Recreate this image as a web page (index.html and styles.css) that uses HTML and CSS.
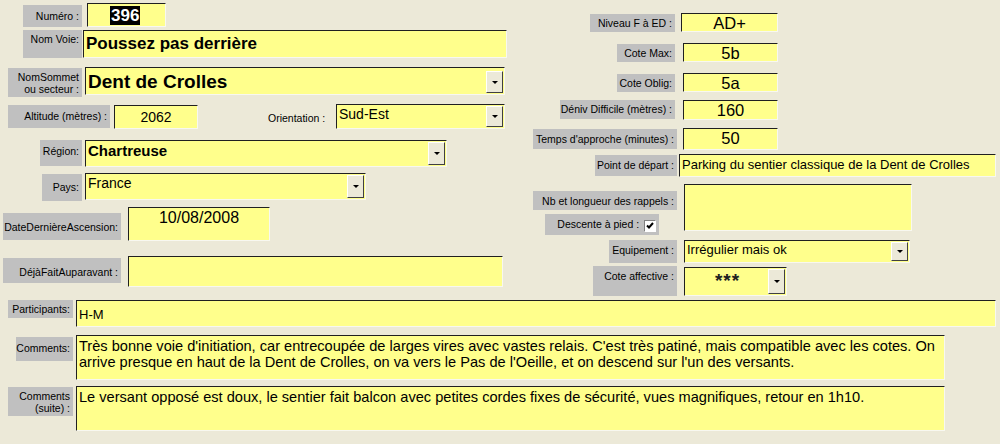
FILE: index.html
```html
<!DOCTYPE html>
<html lang="fr">
<head>
    <meta charset="UTF-8">
    <title>Fiche voie</title>
    <link rel="stylesheet" href="styles.css">
</head>
<body>
    <div class="form">
        <div class="top">
            <!-- colonne de gauche -->
            <div class="left">
                <div class="row r-num">
                    <div class="lbl">Numéro :</div>
                    <div class="fld center"><span class="sel">396</span></div>
                </div>
                <div class="row r-voie">
                    <div class="lbl">Nom Voie:</div>
                    <div class="fld big">Poussez pas derrière</div>
                </div>
                <div class="row r-sommet">
                    <div class="lbl">NomSommet<br>ou secteur :</div>
                    <div class="fld combo big"><span class="val">Dent de Crolles</span><span class="btn"></span></div>
                </div>
                <div class="row r-alt">
                    <div class="lbl">Altitude (mètres) :</div>
                    <div class="fld center">2062</div>
                    <div class="txt">Orientation :</div>
                    <div class="fld combo"><span class="val">Sud-Est</span><span class="btn"></span></div>
                </div>
                <div class="row r-region">
                    <div class="lbl">Région:</div>
                    <div class="fld combo bold"><span class="val">Chartreuse</span><span class="btn"></span></div>
                </div>
                <div class="row r-pays">
                    <div class="lbl">Pays:</div>
                    <div class="fld combo"><span class="val">France</span><span class="btn"></span></div>
                </div>
                <div class="row r-date">
                    <div class="lbl">DateDernièreAscension:</div>
                    <div class="fld center date">10/08/2008</div>
                </div>
                <div class="row r-deja">
                    <div class="lbl">DéjàFaitAuparavant :</div>
                    <div class="fld"></div>
                </div>
            </div>

            <!-- colonne de droite -->
            <div class="right">
                <div class="row r-niveau">
                    <div class="lbl">Niveau F à ED :</div>
                    <div class="fld center mid">AD+</div>
                </div>
                <div class="row r-max">
                    <div class="lbl">Cote Max:</div>
                    <div class="fld center mid">5b</div>
                </div>
                <div class="row r-oblig">
                    <div class="lbl">Cote Oblig:</div>
                    <div class="fld center mid">5a</div>
                </div>
                <div class="row r-deniv">
                    <div class="lbl">Déniv Difficile (mètres) :</div>
                    <div class="fld center mid">160</div>
                </div>
                <div class="row r-temps">
                    <div class="lbl">Temps d'approche (minutes) :</div>
                    <div class="fld center mid">50</div>
                </div>
                <div class="row r-depart">
                    <div class="lbl">Point de départ :</div>
                    <div class="fld small">Parking du sentier classique de la Dent de Crolles</div>
                </div>
                <div class="row r-rappels">
                    <div class="stack">
                        <div class="lbl l-nb">Nb et longueur des rappels :</div>
                        <div class="lbl l-pied">Descente à pied :
                            <span class="check">
                                <svg width="8" height="8" viewBox="0 0 8 8"><path d="M1 3.5 L3 5.5 L7 1" fill="none" stroke="#000" stroke-width="2"/></svg>
                            </span>
                        </div>
                    </div>
                    <div class="fld"></div>
                </div>
                <div class="row r-equip">
                    <div class="lbl">Equipement :</div>
                    <div class="fld combo small"><span class="val">Irrégulier mais ok</span><span class="btn"></span></div>
                </div>
                <div class="row r-affect">
                    <div class="lbl">Cote affective :</div>
                    <div class="fld combo small"><span class="val stars">***</span><span class="btn"></span></div>
                </div>
            </div>
        </div>

        <!-- bas du formulaire -->
        <div class="bottom">
            <div class="row r-part">
                <div class="lbl">Participants:</div>
                <div class="fld small">H-M</div>
            </div>
            <div class="row r-comm">
                <div class="lbl">Comments:</div>
                <div class="fld memo">Très bonne voie d'initiation, car entrecoupée de larges vires avec vastes relais. C'est très patiné, mais compatible avec les cotes. On arrive presque en haut de la Dent de Crolles, on va vers le Pas de l'Oeille, et on descend sur l'un des versants.</div>
            </div>
            <div class="row r-suite">
                <div class="lbl">Comments<br>(suite) :</div>
                <div class="fld memo">Le versant opposé est doux, le sentier fait balcon avec petites cordes fixes de sécurité, vues magnifiques, retour en 1h10.</div>
            </div>
        </div>
    </div>
</body>
</html>
```

FILE: styles.css
```css
body {
    margin: 0;
    padding: 0;
    background-color: #ece9d8;
    font-family: "Liberation Sans", Arial, sans-serif;
    width: 1000px;
    height: 444px;
    overflow: hidden;
}

.form {
    display: flex;
    flex-direction: column;
}

.top {
    display: flex;
    height: 300px;
}

.left {
    width: 520px;
    padding-top: 3px;
}

.right {
    flex: 1;
    padding-top: 13px;
}

.row {
    display: flex;
    align-items: flex-start;
    box-sizing: border-box;
}

/* etiquettes grises */
.lbl {
    background-color: #c0c0c0;
    color: #000;
    font-size: 10.5px;
    line-height: 12px;
    text-align: right;
    padding: 3px 3px 0 0;
    box-sizing: border-box;
    white-space: nowrap;
}

.txt {
    font-size: 10.5px;
    margin-top: 8px;
    margin-left: 70px;
    width: 62px;
    white-space: nowrap;
}

/* champs jaunes */
.fld {
    background-color: #ffff8c;
    border-style: solid;
    border-width: 1px;
    border-color: #202020 #f8f8f0 #f8f8f0 #202020;
    box-sizing: border-box;
    font-size: 14px;
    line-height: 17px;
    padding: 1px 0 0 2px;
    color: #000;
    white-space: nowrap;
    overflow: hidden;
}

.fld.center {
    text-align: center;
    padding-left: 0;
}

.fld.big {
    font-size: 17px;
    font-weight: bold;
    line-height: 22px;
    padding-top: 2px;
}

.combo.big {
    font-size: 19px;
}

.fld.bold {
    font-size: 15px;
    font-weight: bold;
}

.fld.small {
    font-size: 13px;
    line-height: 16px;
}

.fld.mid {
    font-size: 16.5px;
    line-height: 17px;
}

.fld.date {
    font-size: 16px;
    line-height: 18px;
}

.fld.memo {
    white-space: normal;
    font-size: 14.6px;
    line-height: 16px;
    padding-top: 2px;
}

.sel {
    background-color: #000;
    color: #fff;
    font-weight: bold;
    font-size: 17px;
    line-height: 19px;
    padding: 0 1px;
    margin-left: 22px;
    position: relative;
    top: 1px;
}

/* listes deroulantes */
.combo {
    display: flex;
    padding: 0 1px 1px 2px;
}

.combo .val {
    flex: 1;
    padding-top: 1px;
}

.combo .btn {
    width: 17px;
    margin-top: 1px;
    height: calc(100% - 1px);
    background-color: #ece9d8;
    border-style: solid;
    border-width: 1px;
    border-color: #fff #404040 #404040 #fff;
    box-sizing: border-box;
    display: flex;
    align-items: center;
    justify-content: center;
}

.combo .btn::after {
    content: "";
    border-left: 3px solid transparent;
    border-right: 3px solid transparent;
    border-top: 3px solid #000;
}

.combo.big .btn {
    height: 22px;
}

.stars {
    text-align: center;
    font-size: 19px;
    font-weight: bold;
    line-height: 24px;
    letter-spacing: 1px;
    color: #202020;
}

.check {
    display: inline-flex;
    align-items: center;
    justify-content: center;
    width: 12px;
    height: 12px;
    background-color: #fff;
    border-style: solid;
    border-width: 1px;
    border-color: #808080 #fff #fff #808080;
    box-sizing: border-box;
    vertical-align: -2px;
    margin-left: 2px;
}

/* gauche */
.r-num { height: 27px; }
.r-num .lbl { margin: 2px 0 0 23px; width: 59px; height: 22px; padding-top: 5px; }
.r-num .fld { margin-left: 5px; width: 79px; height: 24px; text-align: left; }

.r-voie { height: 37px; }
.r-voie .lbl { margin-left: 23px; width: 59px; height: 28px; }
.r-voie .fld { margin-left: 1px; width: 424px; height: 28px; }

.r-sommet { height: 37px; }
.r-sommet .lbl { margin: 1px 0 0 8px; width: 74px; height: 29px; padding-top: 3px; }
.r-sommet .fld { margin-left: 3px; width: 420px; height: 28px; }

.r-alt { height: 36px; }
.r-alt .lbl { margin: 1px 0 0 8px; width: 102px; height: 23px; padding-top: 5px; }
.r-alt .fld.center { margin: 1px 0 0 4px; width: 84px; height: 24px; padding-top: 3px; }
.r-alt .combo { margin-left: 6px; width: 169px; height: 25px; }

.r-region { height: 33px; }
.r-region .lbl { margin-left: 40px; width: 42px; height: 26px; padding-top: 5px; }
.r-region .fld { margin-left: 3px; width: 362px; height: 27px; }

.r-pays { height: 34px; }
.r-pays .lbl { margin: 1px 0 0 42px; width: 40px; height: 27px; padding-top: 7px; }
.r-pays .fld { margin-left: 3px; width: 281px; height: 27px; }

.r-date { height: 49px; }
.r-date .lbl { margin: 6px 0 0 3px; width: 118px; height: 27px; padding-top: 8px; }
.r-date .fld { margin-left: 7px; width: 142px; height: 34px; }

.r-deja .lbl { margin: 2px 0 0 3px; width: 118px; height: 25px; padding-top: 8px; }
.r-deja .fld { margin-left: 7px; width: 375px; height: 31px; }

/* droite */
.r-niveau { height: 30px; }
.r-niveau .lbl { margin: 1px 0 0 70px; width: 85px; height: 18px; }
.r-niveau .fld { margin-left: 6px; width: 97px; height: 19px; }

.r-max, .r-oblig { height: 30px; }
.r-oblig { height: 27px; }
.r-max .lbl, .r-oblig .lbl { margin: 1px 0 0 97px; width: 58px; height: 18px; }
.r-max .fld, .r-oblig .fld { margin-left: 8px; width: 95px; height: 19px; }

.r-deniv { height: 28px; }
.r-deniv .lbl { margin-left: 40px; width: 115px; height: 19px; }
.r-deniv .fld { margin-left: 8px; width: 95px; height: 20px; }

.r-temps { height: 26px; }
.r-temps .lbl { margin: 1px 0 0 13px; width: 144px; height: 20px; padding-top: 4px; }
.r-temps .fld { margin-left: 6px; width: 95px; height: 22px; }

.r-depart { height: 30px; }
.r-depart .lbl { margin: 1px 0 0 75px; width: 82px; height: 21px; padding-top: 4px; }
.r-depart .fld { margin-left: 2px; width: 317px; height: 23px; padding-top: 2px; }

.r-rappels { height: 56px; }
.stack {
    display: flex;
    flex-direction: column;
    width: 157px;
}
.l-nb { margin: 7px 0 0 13px; width: 144px; height: 19px; padding-top: 4px; }
.l-pied { margin: 4px 0 0 25px; width: 114px; height: 21px; padding-top: 4px; }
.r-rappels .fld { margin-left: 7px; width: 228px; height: 47px; }

.r-equip { height: 26px; }
.r-equip .lbl { margin-left: 89px; width: 68px; height: 23px; padding-top: 4px; }
.r-equip .fld { margin-left: 7px; width: 226px; height: 23px; }

.r-affect .lbl { margin-left: 73px; width: 84px; height: 30px; padding-top: 4px; }
.r-affect .fld { margin: 1px 0 0 7px; width: 103px; height: 29px; }

/* bas */
.r-part { height: 35px; }
.r-part .lbl { margin-left: 8px; width: 65px; height: 18px; }
.r-part .fld { margin-left: 3px; width: 920px; height: 27px; padding-top: 6px; }

.r-comm { height: 51px; }
.r-comm .lbl { margin: 2px 0 0 16px; width: 57px; height: 24px; padding-top: 5px; }
.r-comm .fld { margin-left: 3px; width: 869px; height: 45px; }

.r-suite .lbl { margin: 1px 0 0 8px; width: 65px; height: 29px; padding-top: 3px; }
.r-suite .fld { margin-left: 3px; width: 869px; height: 45px; }
```
